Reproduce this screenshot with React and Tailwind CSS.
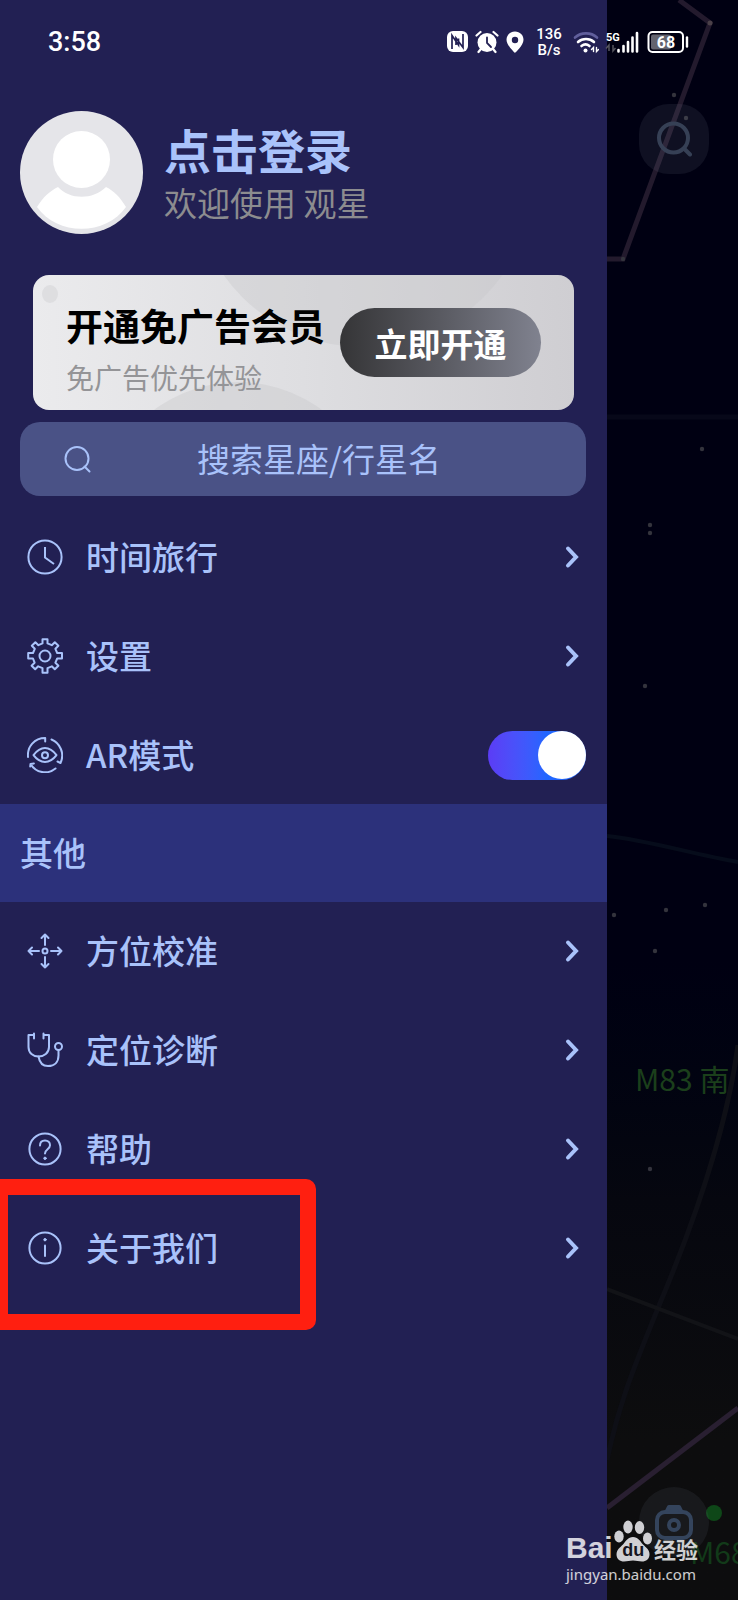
import { useState } from 'react';

const iconProps = {
    viewBox: '0 0 36 36',
    className: 'w-9 h-9 shrink-0',
    fill: 'none',
    stroke: 'currentColor',
    strokeWidth: 2,
    'aria-hidden': true,
};

const ClockIcon = () => (
    <svg {...iconProps}>
        <circle cx="18" cy="18" r="16.6" />
        <path d="M18 8v10.5l9 6.5" />
    </svg>
);

const GearIcon = () => (
    <svg {...iconProps} strokeLinejoin="round">
        <circle cx="18" cy="18" r="5.5" />
        <path d="M15.5 1.2h5v4.2l4.3 1.8 3-3 3.600 3.600-3 3 1.800 4.200h4.800v5.500h-4.800l-1.800 4.200 3 3-3.600 3.600-3-3-4.300 1.800v4.700h-5v-4.700l-4.300-1.800-3 3-3.600-3.600 3-3L6 20.500H1.200V15H6l1.800-4.200-3-3 3.600-3.600 3 3 4.100-1.800z" />
    </svg>
);

const ArIcon = () => (
    <svg {...iconProps} strokeLinecap="round" strokeLinejoin="round">
        <path d="M6.500 18.200C10 13.400 13.700 11 18 11s8 2.400 11.500 7.200C26 22.800 22.300 25 18 25S10 22.800 6.500 18.200z" />
        <circle cx="18" cy="18.200" r="3" />
        <path d="M1 20C0 9.500 7.500 1 18.200 1v3.500" />
        <path d="M24.500 2.500C33 6 38 16.500 33.500 26l-3-1.500" />
        <path d="M28.500 31.500C20.500 38 9 36 3.500 27l3.400-.5M3.500 27l-.3 2.500" />
    </svg>
);

const MoveIcon = () => (
    <svg {...iconProps} strokeLinecap="round" strokeLinejoin="round">
        <circle cx="18" cy="18" r="2.500" />
        <path d="M18 12V1.500M14.500 5l3.500-3.500L21.500 5" />
        <path d="M18 24v10.500M14.500 31l3.500 3.500 3.500-3.500" />
        <path d="M12 18H1.500M5 14.500L1.500 18 5 21.500" />
        <path d="M24 18h10.500M31 14.500l3.500 3.500-3.500 3.500" />
    </svg>
);

const StethoscopeIcon = () => (
    <svg {...iconProps} strokeLinecap="round" strokeLinejoin="round">
        <path d="M7 1.500v5M7 3H1.500v12c0 6 4.500 9.500 10 9.500S22 21 22 15V3h-5.500M16.500 1.500v5" />
        <path d="M11.500 24.500c1 6 4.500 9.500 9.500 9.500 6.500 0 10.500-4 10.500-10.500v-5" />
        <circle cx="31.500" cy="14.500" r="3.500" />
    </svg>
);

const HelpIcon = () => (
    <svg {...iconProps} strokeLinecap="round">
        <circle cx="18" cy="18" r="15.600" />
        <path d="M13 14.500c0-3 2-5 5-5s5 2 5 4.700c0 4-5 4-5 8.300" />
        <circle cx="18" cy="27.300" r="1.200" fill="currentColor" strokeWidth="1" />
    </svg>
);

const InfoIcon = () => (
    <svg {...iconProps} strokeLinecap="round">
        <circle cx="18" cy="18" r="15.600" />
        <path d="M18 15.500V26" />
        <circle cx="18" cy="9.700" r="1.200" fill="currentColor" strokeWidth="1" />
    </svg>
);

const Chevron = () => (
    <svg viewBox="0 0 24 24" className="w-6 h-6 shrink-0" fill="none" stroke="currentColor" strokeWidth="4" strokeLinecap="round" aria-hidden="true">
        <path d="M8 3.500l8 8.500-8 8.500" />
    </svg>
);

const StatusBar = () => (
    <div className="absolute top-0 inset-x-0 h-[84px] pl-12 pr-[49px] flex items-center justify-between text-white font-['Roboto',sans-serif]">
        <span className="text-[27px] leading-8 font-medium">3:58</span>
        <div className="flex items-center gap-1.5">
            {/* NFC */}
            <svg viewBox="0 0 22 22" className="w-[22px] h-[22px]" aria-hidden="true">
                <rect x="0" y="0" width="21" height="21" rx="6" fill="#fff" />
                <path d="M5 18V4.500l6.500 9.500V7.500M16 3v13.500L9 7v7" fill="none" stroke="#222053" strokeWidth="1.700" />
            </svg>
            {/* Alarm */}
            <svg viewBox="0 0 24 24" className="w-6 h-6" aria-hidden="true">
                <circle cx="12" cy="12.500" r="9.500" fill="#fff" />
                <path d="M1.500 5.500l4-3.500M22.500 5.500l-4-3.500M5.500 19.500L3.500 22M18.500 19.500l2 2.500" stroke="#fff" strokeWidth="2.200" strokeLinecap="round" />
                <path d="M12 7.500V13l4 4" fill="none" stroke="#222053" strokeWidth="1.800" strokeLinecap="round" />
            </svg>
            {/* Location */}
            <svg viewBox="0 0 20 24" className="w-5 h-6" aria-hidden="true">
                <path fillRule="evenodd" fill="#fff" d="M10 1.500c5 0 8.500 3.600 8.500 8.300C18.500 15.500 10 23 10 23S1.500 15.500 1.500 9.800C1.500 5.100 5 1.500 10 1.500zm0 5.300a3.200 3.200 0 100 6.400 3.200 3.200 0 000-6.400z" />
            </svg>
            <div className="w-7 mx-1 text-[15px] leading-4 text-center font-medium">
                <div>136</div>
                <div>B/s</div>
            </div>
            {/* Wifi */}
            <svg viewBox="0 0 26 24" className="w-[26px] h-6" fill="none" strokeLinecap="round" aria-hidden="true">
                <path d="M2 7.500c6-5.500 16-5.500 22 0" stroke="#615f9c" strokeWidth="2.600" />
                <path d="M5 12c4.500-4 11.500-4 16 0" stroke="#fff" strokeWidth="2.600" />
                <path d="M8.500 16c2.500-2 5.500-2 8 0" stroke="#fff" strokeWidth="2.600" />
                <circle cx="12.500" cy="20.500" r="2" fill="#fff" />
                <path d="M20.500 21.500v-4l-2 2M23.500 17.500v4l2-2" stroke="#fff" strokeWidth="1.400" />
            </svg>
            {/* Signal */}
            <svg viewBox="0 0 34 24" className="w-[34px] h-6" aria-hidden="true">
                <text x="1" y="11" fontSize="11" fontWeight="700" fill="#fff">5G</text>
                <path d="M4 21v-6l-3 3.500M8 15v6l2.500-3" fill="none" stroke="#55555f" strokeWidth="1.500" />
                <path d="M13.500 20v1.500M18.500 16v5.500M23 12v9.500M27.500 7.500v14M32 3v18.500" stroke="#fff" strokeWidth="2.600" strokeLinecap="round" />
            </svg>
            {/* Battery */}
            <svg viewBox="0 0 42 24" className="w-[42px] h-6 ml-0.5" aria-hidden="true">
                <rect x="1.500" y="2" width="34.500" height="20" rx="4" fill="none" stroke="#fff" strokeWidth="2" />
                <rect x="4" y="4.500" width="20" height="15" rx="2" fill="#64646f" />
                <path d="M40 7.500v9" stroke="#fff" strokeWidth="2.400" strokeLinecap="round" />
                <text x="19" y="18" fontSize="16" fontWeight="700" fill="#fff" textAnchor="middle">68</text>
            </svg>
        </div>
    </div>
);

const MenuRow = ({ icon: Icon, label, highlighted }) => (
    <li className="relative">
        <button type="button" className="w-full h-[98px] pl-[27px] pr-[23px] flex items-center gap-[23px] text-[33px] leading-10 font-medium text-left">
            <Icon />
            <span className="flex-1 pb-0.5">{label}</span>
            <Chevron />
        </button>
        {highlighted && (
            <span className="absolute -top-5 left-0 w-[316px] h-[151px] border-16 border-l-8 border-[#ff1f10] rounded-r-[10px] pointer-events-none" />
        )}
    </li>
);

const stars = [
    [67, 95], [79, 118], [16, 259], [95, 449], [43, 525], [43, 533], [38, 686],
    [7, 915], [59, 910], [98, 905], [48, 951], [43, 1169],
];

const Sky = () => (
    <section className="relative w-[131px] shrink-0 overflow-hidden flex flex-col justify-between items-start pl-8 pt-[104px] pb-[43px] bg-linear-to-b from-[#000012] from-60% via-[#06070f] via-75% to-[#0d0d0e] to-90%">
        <svg viewBox="0 0 131 1600" preserveAspectRatio="xMidYMid slice" className="absolute inset-0 w-full h-full font-['Noto_Sans_CJK_SC',sans-serif]" fill="none" aria-hidden="true">
            <path d="M72 0l31 23-87 236H0" stroke="#231a2d" strokeWidth="5" />
            <path d="M0 417h131" stroke="#070819" strokeWidth="5" />
            <path d="M0 836c40 4 85 18 131 26" stroke="#060c1b" strokeWidth="4" />
            <path d="M131 1045c-8 60-30 145-80 263-20 50-38 90-51 152" stroke="#0e0f16" strokeWidth="5" />
            <path d="M0 1289l131 50" stroke="#121317" strokeWidth="4" />
            <path d="M0 1508l131-100" stroke="#291f31" strokeWidth="5" />
            {stars.map(([x, y]) => (
                <circle key={`${x}-${y}`} cx={x} cy={y} r="2.200" fill="#34343d" />
            ))}
            <circle cx="103" cy="23" r="2.500" fill="#4a4048" />
            <circle cx="107" cy="1513" r="8" fill="#0e4718" />
            <text x="28" y="1091" fontSize="30" fill="#1b3f1b">M83 南</text>
            <text x="83" y="1564" fontSize="30" fill="#123a19">M68</text>
        </svg>
        <button type="button" aria-label="搜索" className="relative w-[70px] h-[70px] rounded-[30px] bg-[#7d8799]/12 flex items-center justify-center">
            <svg viewBox="0 0 36 36" className="w-9 h-9" fill="none" stroke="#364055" strokeWidth="4" strokeLinecap="round">
                <circle cx="17.500" cy="17" r="14.500" />
                <path d="M28.500 28l5.500 5.500" />
            </svg>
        </button>
        <button type="button" aria-label="拍照" className="relative w-[70px] h-[70px] rounded-full bg-[#7d8799]/10 flex items-center justify-center">
            <svg viewBox="0 0 38 36" className="w-[38px] h-9" fill="none" stroke="#34445c" strokeWidth="4">
                <rect x="2" y="8" width="34" height="26" rx="8" />
                <path d="M12 7l2-4h10l2 4" fill="#34445c" strokeLinejoin="round" />
                <circle cx="19" cy="21" r="5" />
            </svg>
        </button>
    </section>
);

const Watermark = () => (
    <div className="absolute right-10 bottom-[14px] w-[132px] text-white/80 pointer-events-none">
        <div className="flex items-end justify-between h-[42px]">
            <span className="font-['Liberation_Sans',sans-serif] text-[30px] leading-7 font-bold">Bai</span>
            <span className="relative w-[38px] h-[42px]">
                <svg viewBox="0 0 38 42" className="absolute inset-0 w-full h-full" fill="#cfcfd3" aria-hidden="true">
                    <ellipse cx="5" cy="16.500" rx="4.700" ry="6" />
                    <ellipse cx="14" cy="7" rx="4.700" ry="6.500" />
                    <ellipse cx="25.500" cy="7.500" rx="4.700" ry="6.500" />
                    <ellipse cx="33.500" cy="18.500" rx="4.500" ry="6" />
                    <path d="M19 17c5 0 7 4 10 7.500 3 3 6.500 5 6.500 10 0 4.500-3.500 7-7.500 7-3.500 0-5.500-1-9-1s-5.500 1-9 1c-4 0-7.500-2.500-7.500-7 0-5 3.500-7 6.500-10C12 21 14 17 19 17z" />
                </svg>
                <span className="absolute bottom-0.5 inset-x-0 text-center font-['Liberation_Sans',sans-serif] text-[18px] leading-5 font-bold text-[#15151f]">du</span>
            </span>
            <span className="pb-0.5 font-['Noto_Sans_CJK_SC',sans-serif] text-[22px] leading-6 font-bold">经验</span>
        </div>
        <div className="font-['Noto_Sans',sans-serif] text-[15px] leading-6">jingyan.baidu.com</div>
    </div>
);

const App = () => {
    const [arMode, setArMode] = useState(true);
    const [keyword, setKeyword] = useState('');

    return (
        <div className="relative flex min-h-screen overflow-hidden bg-[#000012] font-['Noto_Sans_CJK_SC',sans-serif]">
            <aside className="flex-1 min-w-0 pt-[111px] bg-[#222053] text-[#a9c2fa]">
                {/* Profile */}
                <button type="button" className="px-5 flex items-center gap-[21px] text-left">
                    <svg viewBox="0 0 123 123" className="w-[123px] h-[123px] shrink-0" aria-hidden="true">
                        <circle cx="61.500" cy="61.500" r="61.500" fill="#e5e5e9" />
                        <circle cx="61.500" cy="48.500" r="28.500" fill="#fff" />
                        <path d="M38 76c12 13 35 13 48 0 8 4 14 10 20 20-20 29-69 29-89 0 6-10 13-16 21-20z" fill="#fff" />
                    </svg>
                    <span className="pt-0.5">
                        <span className="block text-[47px] leading-14 font-bold">点击登录</span>
                        <span className="block text-[33px] leading-[50px] text-[#8c8c8f]">欢迎使用 观星</span>
                    </span>
                </button>

                {/* Membership card */}
                <div className="relative mt-[41px] mx-[33px] h-[135px] pl-[33px] pr-[33px] rounded-2xl overflow-hidden bg-linear-to-r from-[#ebebed] via-[#dedee1] to-[#cfced2] flex items-center justify-between">
                    <svg viewBox="0 0 541 135" preserveAspectRatio="xMinYMin slice" className="absolute inset-0 w-full h-full" aria-hidden="true">
                        <circle cx="330" cy="-99" r="171" fill="#c8c7cb" opacity="0.400" />
                        <circle cx="205" cy="247" r="140" fill="#c8c7cb" opacity="0.400" />
                        <ellipse cx="17" cy="19" rx="8" ry="9" fill="#d9d9dc" opacity="0.700" />
                    </svg>
                    <div className="relative pt-4 whitespace-nowrap">
                        <h2 className="text-[37px] leading-[52px] font-bold text-black">开通免广告会员</h2>
                        <p className="text-[28px] leading-[52px] text-[#949497]">免广告优先体验</p>
                    </div>
                    <button type="button" className="relative w-[201px] h-[69px] shrink-0 rounded-full bg-linear-to-r from-[#353537] to-[#80828f] text-[33px] leading-10 font-bold text-white">
                        立即开通
                    </button>
                </div>

                {/* Search */}
                <label className="mt-3 ml-5 mr-[21px] h-[74px] pl-11 pr-[39px] rounded-[20px] bg-[#4a5286] flex items-center">
                    <svg viewBox="0 0 27 27" className="w-[27px] h-[27px] shrink-0" fill="none" stroke="currentColor" strokeWidth="2" strokeLinecap="round" aria-hidden="true">
                        <circle cx="13" cy="12.500" r="11.500" />
                        <path d="M20.500 20.500l5 5" />
                    </svg>
                    <input
                        type="text"
                        aria-label="搜索"
                        placeholder="搜索星座/行星名"
                        value={keyword}
                        onChange={(e) => setKeyword(e.target.value)}
                        className="flex-1 min-w-0 h-12 bg-transparent text-center text-[33px] placeholder:text-[#a9c2fa] outline-none"
                    />
                </label>

                <ul className="pt-3 flex flex-col gap-px">
                    <MenuRow icon={ClockIcon} label="时间旅行" />
                    <MenuRow icon={GearIcon} label="设置" />
                    <li className="h-[98px] pl-[27px] pr-[21px] flex items-center gap-[23px] text-[33px] leading-10 font-medium">
                        <ArIcon />
                        <label htmlFor="ar-mode" className="flex-1 pb-0.5">AR模式</label>
                        <input
                            id="ar-mode"
                            type="checkbox"
                            role="switch"
                            checked={arMode}
                            onChange={(e) => setArMode(e.target.checked)}
                            className="appearance-none w-[98px] h-[49px] rounded-full bg-[#4a5286] checked:bg-linear-to-r checked:from-[#5b3cf5] checked:to-[#2066ff] checked:to-60% flex items-center before:content-[''] before:w-12 before:h-12 before:rounded-full before:bg-white checked:before:ml-auto"
                        />
                    </li>
                </ul>

                <h3 className="h-[98px] pl-5 pb-0.5 flex items-center bg-[#2c317b] text-[33px] leading-10 font-medium">其他</h3>

                <ul className="flex flex-col gap-px">
                    <MenuRow icon={MoveIcon} label="方位校准" />
                    <MenuRow icon={StethoscopeIcon} label="定位诊断" />
                    <MenuRow icon={HelpIcon} label="帮助" />
                    <MenuRow icon={InfoIcon} label="关于我们" highlighted />
                </ul>
            </aside>
            <Sky />
            <StatusBar />
            <Watermark />
        </div>
    );
};

export default App;
